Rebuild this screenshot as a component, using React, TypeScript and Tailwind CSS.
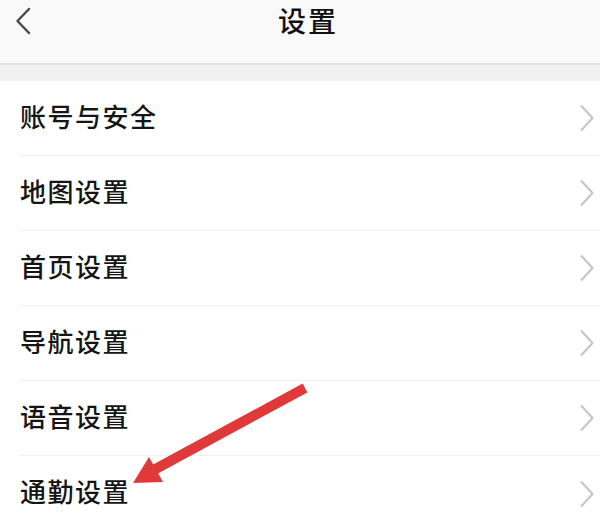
import React from 'react';

const items = ['账号与安全', '地图设置', '首页设置', '导航设置', '语音设置', '通勤设置'];

const ChevronRight = () => (
  <svg width="16" height="28" viewBox="0 0 16 28" fill="none">
    <path d="M2 1.5 L13.5 14 L2 26.5" stroke="#c4c4c4" strokeWidth="2" strokeLinejoin="round" />
  </svg>
);

const SettingRow: React.FC<{ label: string; last?: boolean }> = ({ label, last }) => (
  <div className="flex h-[75px] items-center pl-[20px]">
    <div
      className={`flex h-full flex-1 items-center justify-between pr-[5px] ${last ? '' : 'border-b border-[#efefef]'}`}
    >
      <span className="pb-[5px] text-[26px] font-medium leading-none tracking-[1.5px] text-[#151515]">{label}</span>
      <ChevronRight />
    </div>
  </div>
);

export default function App() {
  return (
    <div
      className="relative h-[525px] w-[600px] overflow-hidden bg-white"
      style={{ fontFamily: '"Noto Sans CJK SC", "Noto Sans", sans-serif' }}
    >
      <div className="h-[63px] bg-[#f9f9f9]">
        <div className="flex h-[42px] items-center pl-[14px]">
          <svg width="18" height="30" viewBox="0 0 18 30" fill="none">
            <path d="M15 3 L3.5 15 L15 27" stroke="#4a4a4a" strokeWidth="2.5" strokeLinejoin="round" strokeLinecap="round" />
          </svg>
          <div className="flex-1 pb-[3px] pr-[16px] text-center text-[28px] font-medium leading-none tracking-[2px] text-[#111]">
            设置
          </div>
        </div>
      </div>
      <div className="h-[18px] border-t-2 border-[#e4e4e4] bg-[#f1f1f1]" />
      <div className="flex flex-col">
        {items.map((label, i) => (
          <SettingRow key={label} label={label} last={i === items.length - 1} />
        ))}
      </div>
      <svg className="pointer-events-none absolute left-0 top-0" width="600" height="525" viewBox="0 0 600 525">
        <line x1="305" y1="388" x2="150" y2="472" stroke="#e0393a" strokeWidth="10" strokeLinecap="butt" />
        <polygon points="133,483 149,457 163,482" fill="#e0393a" />
      </svg>
    </div>
  );
}
